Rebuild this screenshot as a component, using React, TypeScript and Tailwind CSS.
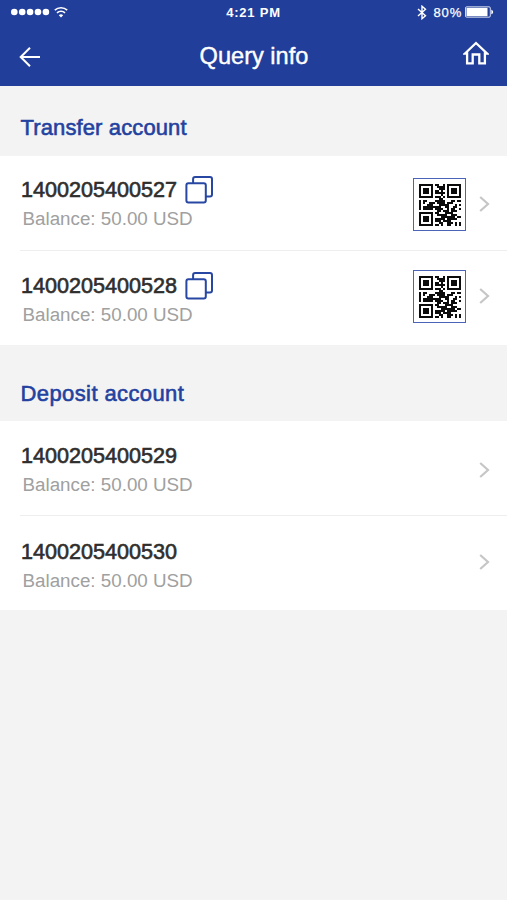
import React from "react";

const QR_ROWS = [
  "111111101100101111111",
  "100000100111101000001",
  "101110100011101011101",
  "101110101101001011101",
  "101110101111101011101",
  "100000100001001000001",
  "111111101110101111111",
  "000000000011000000000",
  "101100001111100011011",
  "101001110111101110000",
  "100011100011111000101",
  "101111111110011001100",
  "101111101111001011001",
  "000000000110111011100",
  "111111101100011110000",
  "100000100111110011100",
  "101110100001111111011",
  "101110101111101111100",
  "101110101110111100000",
  "100000100011001110101",
  "111111101101001100101",
];

function QrCode() {
  return (
    <div className="flex h-[53px] w-[53px] items-center justify-center border-[1.5px] border-[#4a65b6] bg-white">
      <svg width="42" height="42" viewBox="0 0 21 21" fill="#0c0c0c" shapeRendering="crispEdges">
        {QR_ROWS.map((row, y) =>
          row.split("").map((cell, x) =>
            cell === "1" ? <rect key={`${x}-${y}`} x={x} y={y} width="1" height="1" /> : null
          )
        )}
      </svg>
    </div>
  );
}

function CopyIcon() {
  return (
    <svg className="-mt-px" width="28" height="28" viewBox="0 0 28 28" fill="none" stroke="#2747a3" strokeWidth="2">
      <path d="M8.1 7V3a2 2 0 0 1 2-2H25a2 2 0 0 1 2 2v15.4a2 2 0 0 1-2 2h-4" />
      <rect x="1.4" y="7.2" width="19.4" height="19.4" rx="2" />
    </svg>
  );
}

function Chevron() {
  return (
    <svg width="11" height="16" viewBox="0 0 11 16" fill="none" stroke="#c6c6c6" strokeWidth="2.2">
      <path d="M1.2 1 9 8l-7.8 7" />
    </svg>
  );
}

function Row({ account, qr, divider, chevron, text }: { account: string; qr?: string; divider?: boolean; chevron: string; text: string }) {
  return (
    <div className="ml-5">
      <div className={divider ? "flex h-[95px] border-b border-[#eeeeee]" : "flex h-[94px]"}>
        <div className={`flex-1 ${text}`}>
          <div className="flex h-7 items-center">
            <span className="w-[165px] pl-px text-[21.6px] leading-7 text-[#2e2e2e] [-webkit-text-stroke:0.6px_#2e2e2e]">{account}</span>
            {qr && <CopyIcon />}
          </div>
          <div className="mt-[3px] pl-[2.5px] text-[18.8px] leading-6 text-[#a0a0a0]">Balance: 50.00 USD</div>
        </div>
        {qr && (
          <div className={qr}>
            <QrCode />
          </div>
        )}
        <div className={chevron}>
          <Chevron />
        </div>
      </div>
    </div>
  );
}

function SectionTitle({ children, className }: { children: React.ReactNode; className: string }) {
  return <h2 className={`pl-[20.5px] text-[22px] leading-7 text-[#2342a0] [-webkit-text-stroke:0.6px_#2342a0] ${className}`}>{children}</h2>;
}

export default function App() {
  return (
    <div className="h-[900px] w-[507px] overflow-hidden bg-[#f3f3f3] font-['Liberation_Sans',Arial,sans-serif]">
      <header className="h-[86px] bg-[#213e9a] text-white">
        <div className="grid h-6 grid-cols-3 items-center">
          <div className="flex items-center pl-[11px]">
            <svg width="39" height="8" viewBox="0 0 39 8" fill="white">
              {[3.3, 11.2, 19.1, 27, 34.9].map((x) => (
                <circle key={x} cx={x} cy="4" r="3.3" />
              ))}
            </svg>
            <svg className="ml-1" width="14" height="12" viewBox="0 0 14 12" fill="none" stroke="white" strokeWidth="1.6">
              <path d="M.8 4.2a9 9 0 0 1 12.4 0M3 6.9a5.8 5.8 0 0 1 8 0" />
              <path d="M4.8 9.2a3.2 3.2 0 0 1 4.4 0L7 11.4Z" fill="white" stroke="none" />
            </svg>
          </div>
          <div className="pt-px text-center text-[13px] font-bold tracking-[0.8px]">4:21 PM</div>
          <div className="flex items-center justify-end pr-[13px]">
            <svg width="10" height="15" viewBox="0 0 10 15" fill="none" stroke="white" strokeWidth="1.4">
              <path d="m1 4 7.5 6.8L5 13.7V1.2l3.5 3L1 11" />
            </svg>
            <span className="ml-[7px] pt-px text-[13px] tracking-[0.8px] [-webkit-text-stroke:0.25px_white]">80%</span>
            <svg className="ml-[3px]" width="29" height="12" viewBox="0 0 29 12">
              <rect x=".5" y=".8" width="24.8" height="10.4" rx="1.2" fill="none" stroke="white" strokeWidth=".8" />
              <rect x="1.5" y="1.8" width="21" height="8.4" fill="white" />
              <path d="M26.3 3.7c2.4.6 2.4 4 0 4.6Z" fill="white" />
            </svg>
          </div>
        </div>
        <div className="grid h-[62px] grid-cols-[1fr_auto_1fr] items-center">
          <svg className="ml-[19px] mt-1" width="22" height="20" viewBox="0 0 22 20" fill="none" stroke="white" strokeWidth="2">
            <path d="M11 .8 1.7 10l9.3 9.2M2 10h19" />
          </svg>
          <h1 className="ml-px mt-px text-[23.6px] leading-8 [-webkit-text-stroke:0.4px_white]">Query info</h1>
          <svg className="-mt-[5px] mr-[18px] justify-self-end" width="26" height="24" viewBox="0 0 26 24" fill="none" stroke="white" strokeWidth="2.3">
            <path d="M2 12.5 13 2l11 10.5h-2.1v9.8h-5.6v-8.8H9.7v8.8H4.1v-9.8Z" />
          </svg>
        </div>
      </header>
      <section className="h-[259px] pt-7">
        <SectionTitle className="tracking-[0.12px]">Transfer account</SectionTitle>
        <div className="mt-[14px] bg-white">
          <Row account="1400205400527" text="pt-5" qr="pt-[22px]" divider chevron="pt-10 ml-[13px] mr-[17px]" />
          <Row account="1400205400528" text="pt-[21px]" qr="pt-[19px]" chevron="pt-[37px] ml-[13px] mr-[17px]" />
        </div>
      </section>
      <section className="pt-[35px]">
        <SectionTitle className="tracking-[0.4px]">Deposit account</SectionTitle>
        <div className="mt-[13px] bg-white">
          <Row account="1400205400529" text="pt-[21px]" divider chevron="pt-[41px] mr-[17px]" />
          <Row account="1400205400530" text="pt-[22px]" chevron="pt-[38px] mr-[17px]" />
        </div>
      </section>
    </div>
  );
}
